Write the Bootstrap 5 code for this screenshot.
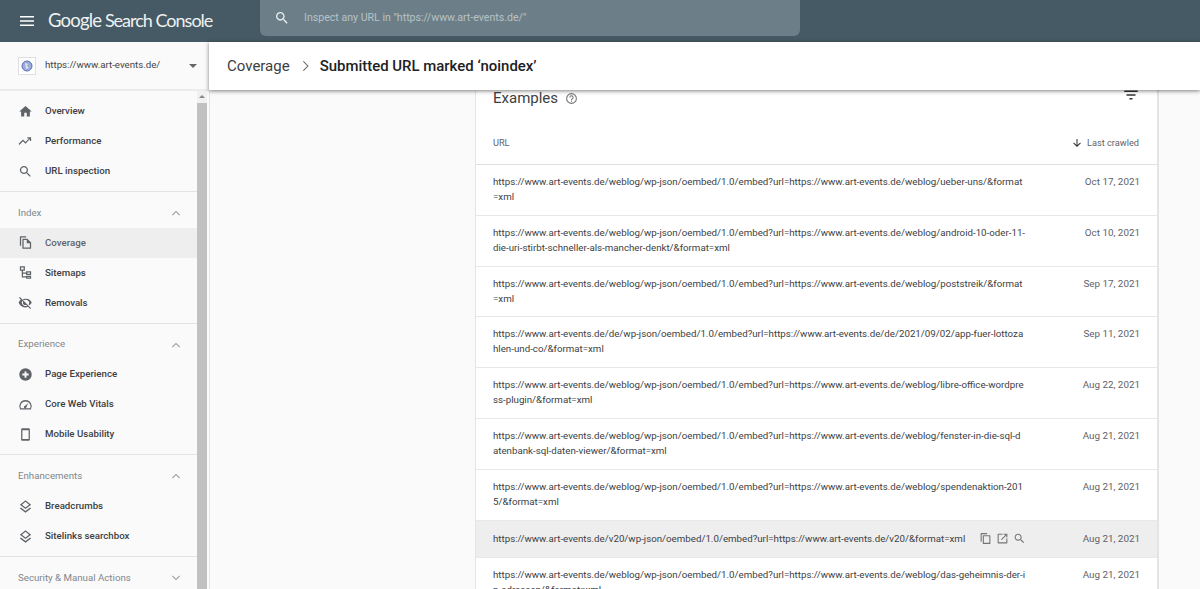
<!DOCTYPE html>
<html lang="en"><head><meta charset="utf-8"><title>Search Console</title>
<link href="https://cdn.jsdelivr.net/npm/bootstrap@5.3.0/dist/css/bootstrap.min.css" rel="stylesheet">
<script src="https://cdn.jsdelivr.net/npm/bootstrap@5.3.0/dist/js/bootstrap.bundle.min.js"></script>
<style>
html,body{height:589px;overflow:hidden}
body{font-family:Roboto,"Liberation Sans",sans-serif;background:#fafafa;color:#3c4043}
.ico{fill:currentColor;flex:none}
.topbar{height:42px;background:#455a64;color:#fff}
.burger{margin:0 13px 0 19px;width:16px;height:16px}
.logo{font-family:Lato,Roboto,sans-serif;font-size:18px;letter-spacing:-1px;width:212px;color:#eef1f2;white-space:nowrap}
.logo b{font-weight:400;font-size:18.5px;letter-spacing:-.8px}
.searchbox{width:540px;height:36px;margin-top:-6px;background:#6c7f88;border-radius:0 0 6px 6px;padding-left:14px;color:#b7c2c7;font-size:10.6px;gap:14px}
.searchbox svg{color:#eceff1}
.main{height:547px}
.side{width:210px;border-right:1px solid #e6e6e6;background:#fafafa;flex:none}
.prop{height:49px;padding:0 12px 0 18px;border-bottom:2px solid #ececec;font-size:9.7px;color:#444;background:#fafafa}
.favi{width:18px;height:18px;border:1px solid #e0e0e0;background:#fff;margin-right:9px}
.caret{margin-left:auto;border:4px solid transparent;border-top:4px solid #666;border-bottom:0}
.sidewrap{height:498px;overflow:hidden}
.sidenav{width:197px;flex:none;padding-top:5.3px}
.scroll{width:10px;background:#f1f1f1;flex:none;position:relative;margin-right:2px}
.thumb{height:100%;margin-top:12px;background:#c1c1c1}
.scroll::before{content:"";position:absolute;top:4px;left:2px;border:3px solid transparent;border-bottom:3px solid #888;border-top:0}
.item{height:30px;padding-left:18px;font-size:9.7px;font-weight:500;color:#3c4043;gap:12px}
.item svg{color:#5f6368}
.item.on{background:#eeeeee;color:#5f6368}
.sect{height:35.6px;padding:6px 14px 0 18px;font-size:9.7px;color:#80868b}
.sect svg{margin-left:auto;color:#9aa0a6}
.rule{border-top:1px solid #e4e4e4;margin-top:5px}
.head{height:48px;background:#fff;padding-left:18px;box-shadow:0 1px 4px rgba(0,0,0,.5);position:relative;z-index:2;margin-left:-1px}
.crumb{font-size:15px;color:#3c4043}
.chev{margin:0 7px;color:#5f6368}
.title{font-size:14.95px;font-weight:500;color:#202124}
.content{height:499px;overflow:hidden}
.tablecard{width:684px;margin-left:265px;background:#fff;border-left:1px solid #e4e4e4;border-right:2px solid #e4e4e4}
.exam{height:16px;padding:0 17px}
.exam span{font-size:15px;color:#3c4043}
.exam .q{margin-left:7px;color:#757575}
.exam .f{margin-left:auto;margin-top:-6px;color:#333}
.cols{height:59px;padding:16px 18px 0 17px;font-size:9.2px;color:#5f6368;border-bottom:1px solid #e0e0e0}
.cols .sortlab{margin-left:auto;gap:4px}
.cols svg{color:#333}
.rowline{height:50.8px;padding:9px 17px 0;border-bottom:1px solid #e8e8e8;font-size:9.72px;line-height:15px;color:#3c4043;white-space:nowrap}
.rowline .dt{margin-left:auto;color:#5f6368;font-size:9.85px}
.rowline.hov{height:37px;background:#eeeeee;padding-top:0;align-items:center}
.rowline.hov .tools{margin-left:14px;gap:4px;color:#757575}
</style></head><body>
<div class="topbar d-flex align-items-center">
 <svg class="ico burger" viewBox="0 0 16 16"><path d="M1 3h14v1.400H1zM1 7.300h14v1.400H1zM1 11.600h14V13H1z"/></svg>
 <div class="logo"><b>Google</b> Search Console</div>
 <div class="searchbox d-flex align-items-center">
  <svg class="ico" width="16" height="16" viewBox="0 0 24 24"><path d="M15.5 14h-.79l-.28-.27C15.41 12.59 16 11.11 16 9.5 16 5.91 13.09 3 9.5 3S3 5.91 3 9.5 5.91 16 9.5 16c1.61 0 3.09-.59 4.23-1.57l.27.28v.79l5 4.99L20.49 19l-4.99-5zm-6 0C7.01 14 5 11.99 5 9.5S7.01 5 9.5 5 14 7.01 14 9.5 11.99 14 9.5 14z"/></svg>
  <span>Inspect any URL in "https://www.art-events.de/"</span>
 </div>
</div>
<div class="main d-flex">
 <aside class="side">
  <div class="prop d-flex align-items-center">
   <span class="favi d-flex align-items-center justify-content-center"><svg width="12" height="12" viewBox="0 0 12 12"><circle cx="6" cy="6" r="5" fill="#9dabd9" stroke="#5a71b8" stroke-width="1"/><path d="M4 3l3 1-1 2 2 2-3 1z" fill="#dbe1f2"/></svg></span>
   <span>https://www.art-events.de/</span><span class="caret"></span>
  </div>
  <div class="sidewrap d-flex">
   <nav class="sidenav">
    <div class="item d-flex align-items-center"><svg class="ico" width="15" height="15" viewBox="0 0 24 24"><path d="M10 20v-6h4v6h5v-8h3L12 3 2 12h3v8z"/></svg><span>Overview</span></div>
    <div class="item d-flex align-items-center"><svg class="ico" width="15" height="15" viewBox="0 0 24 24"><path d="M2 17.500l6-6 4 4 7-7.600V11h2V5h-6v2h2.600L12 12.700l-4-4-7 7z"/></svg><span>Performance</span></div>
    <div class="item d-flex align-items-center"><svg class="ico" width="15" height="15" viewBox="0 0 24 24"><path d="M15.5 14h-.79l-.28-.27C15.41 12.59 16 11.11 16 9.5 16 5.91 13.09 3 9.5 3S3 5.91 3 9.5 5.91 16 9.5 16c1.61 0 3.09-.59 4.23-1.57l.27.28v.79l5 4.99L20.49 19l-4.99-5zm-6 0C7.01 14 5 11.99 5 9.5S7.01 5 9.5 5 14 7.01 14 9.5 11.99 14 9.5 14z"/></svg><span>URL inspection</span></div>
    <div class="rule"></div>
    <div class="sect d-flex align-items-center"><span>Index</span><svg class="ico" width="14" height="14" viewBox="0 0 24 24"><path d="M12 8l-7 7 1.400 1.400L12 10.800l5.600 5.600L19 15z"/></svg></div>
    <div class="item on d-flex align-items-center"><svg class="ico" width="15" height="15" viewBox="0 0 24 24"><path d="M4 2h9v2H5v13H3V3a1 1 0 0 1 1-1zm4 4h7l6 6v9a1 1 0 0 1-1 1H8a1 1 0 0 1-1-1V7a1 1 0 0 1 1-1zm1 2v12h10v-7h-5V8z"/></svg><span>Coverage</span></div>
    <div class="item d-flex align-items-center"><svg class="ico" width="15" height="15" viewBox="0 0 24 24"><path fill-rule="evenodd" d="M3 2h8v7H8v3h5v-2h8v6h-8v-2H8v4h5v-1h8v5h-8v-2H6V9H3zm2 2v3h4V4zm10 8v2h4v-2zm0 7v1h4v-1z"/></svg><span>Sitemaps</span></div>
    <div class="item d-flex align-items-center"><svg class="ico" width="15" height="15" viewBox="0 0 24 24"><path d="M12 6a10 10 0 0 1 10 6 10 10 0 0 1-3.500 4.200L17 14.700a6 6 0 0 0 1-2.700 6 6 0 0 0-8.500-3.700L7.500 6.800A11 11 0 0 1 12 6zM3 3l18 18-1.400 1.400-3.500-3.500A11 11 0 0 1 1 12a11 11 0 0 1 3.400-4.400L1.600 4.400zm3.800 6A6 6 0 0 0 6 12a6 6 0 0 0 8.500 5.200L13 15.700a3.500 3.500 0 0 1-4.700-4.700z"/></svg><span>Removals</span></div>
    <div class="rule"></div>
    <div class="sect d-flex align-items-center"><span>Experience</span><svg class="ico" width="14" height="14" viewBox="0 0 24 24"><path d="M12 8l-7 7 1.400 1.400L12 10.800l5.600 5.600L19 15z"/></svg></div>
    <div class="item d-flex align-items-center"><svg class="ico" width="15" height="15" viewBox="0 0 24 24"><path fill-rule="evenodd" d="M12 2a10 10 0 1 1 0 20 10 10 0 0 1 0-20zM10.500 7v3.500H7v3h3.500V17h3v-3.500H17v-3h-3.500V7z"/></svg><span>Page Experience</span></div>
    <div class="item d-flex align-items-center"><svg class="ico" width="15" height="15" viewBox="0 0 24 24"><path fill-rule="evenodd" d="M12 5a10 10 0 0 1 8.700 15H3.300A10 10 0 0 1 12 5zm0 2a8 8 0 0 0-7.400 11h14.800A8 8 0 0 0 12 7zm4.500 2.500l-3 6.500a2 2 0 1 1-2-2z"/></svg><span>Core Web Vitals</span></div>
    <div class="item d-flex align-items-center"><svg class="ico" width="15" height="15" viewBox="0 0 24 24"><path fill-rule="evenodd" d="M7 2h10a2 2 0 0 1 2 2v16a2 2 0 0 1-2 2H7a2 2 0 0 1-2-2V4a2 2 0 0 1 2-2zm0 3v14h10V5z"/></svg><span>Mobile Usability</span></div>
    <div class="rule"></div>
    <div class="sect d-flex align-items-center"><span>Enhancements</span><svg class="ico" width="14" height="14" viewBox="0 0 24 24"><path d="M12 8l-7 7 1.400 1.400L12 10.800l5.600 5.600L19 15z"/></svg></div>
    <div class="item d-flex align-items-center"><svg class="ico" width="15" height="15" viewBox="0 0 24 24"><path fill-rule="evenodd" d="M12 2l9 7-9 7-9-7zm0 2.500L6.300 9l5.700 4.500L17.700 9zM4.600 13.600L12 19.300l7.400-5.700L21 15l-9 7-9-7z"/></svg><span>Breadcrumbs</span></div>
    <div class="item d-flex align-items-center"><svg class="ico" width="15" height="15" viewBox="0 0 24 24"><path fill-rule="evenodd" d="M12 2l9 7-9 7-9-7zm0 2.500L6.300 9l5.700 4.500L17.700 9zM4.600 13.600L12 19.300l7.400-5.700L21 15l-9 7-9-7z"/></svg><span>Sitelinks searchbox</span></div>
    <div class="rule"></div>
    <div class="sect d-flex align-items-center"><span>Security &amp; Manual Actions</span><svg class="ico" width="14" height="14" viewBox="0 0 24 24"><path d="M12 16l7-7-1.400-1.400L12 13.200 6.400 7.600 5 9z"/></svg></div>
   </nav>
   <div class="scroll"><div class="thumb"></div></div>
  </div>
 </aside>
 <div class="flex-grow-1">
  <header class="head d-flex align-items-center">
   <span class="crumb">Coverage</span>
   <svg class="ico chev" width="16" height="16" viewBox="0 0 24 24"><path d="M9 5.500L10 4.500 17.500 12 10 19.500 9 18.500 15.500 12z"/></svg>
   <span class="title">Submitted URL marked ‘noindex’</span>
  </header>
  <div class="content">
   <section class="tablecard">
    <div class="exam d-flex align-items-center"><span>Examples</span>
     <svg class="ico q" width="13" height="13" viewBox="0 0 24 24"><path fill-rule="evenodd" d="M12 2a10 10 0 1 1 0 20 10 10 0 0 1 0-20zm0 2a8 8 0 1 0 0 16 8 8 0 0 0 0-16zm-1 12h2v2h-2zm1-10a4 4 0 0 1 4 4c0 2.500-3 2.700-3 5h-2c0-3.200 3-3 3-5a2 2 0 0 0-4 0H8a4 4 0 0 1 4-4z"/></svg>
     <svg class="ico f" width="18" height="18" viewBox="0 0 24 24"><path d="M3 6h18v2H3zm3 5h12v2H6zm4 5h4v2h-4z"/></svg>
    </div>
    <div class="cols d-flex align-items-center"><span>URL</span><span class="sortlab d-flex align-items-center"><svg class="ico" width="12" height="12" viewBox="0 0 24 24"><path d="M11 4h2v12.200l5.300-5.300 1.400 1.400L12 20l-7.700-7.700 1.400-1.400 5.300 5.300z"/></svg>Last crawled</span></div>
    <div class="rowline d-flex"><span>https://www.art-events.de/weblog/wp-json/oembed/1.0/embed?url=https://www.art-events.de/weblog/ueber-uns/&amp;format<br>=xml</span><span class="dt">Oct 17, 2021</span></div>
    <div class="rowline d-flex"><span>https://www.art-events.de/weblog/wp-json/oembed/1.0/embed?url=https://www.art-events.de/weblog/android-10-oder-11-<br>die-uri-stirbt-schneller-als-mancher-denkt/&amp;format=xml</span><span class="dt">Oct 10, 2021</span></div>
    <div class="rowline d-flex"><span>https://www.art-events.de/weblog/wp-json/oembed/1.0/embed?url=https://www.art-events.de/weblog/poststreik/&amp;format<br>=xml</span><span class="dt">Sep 17, 2021</span></div>
    <div class="rowline d-flex"><span>https://www.art-events.de/de/wp-json/oembed/1.0/embed?url=https://www.art-events.de/de/2021/09/02/app-fuer-lottoza<br>hlen-und-co/&amp;format=xml</span><span class="dt">Sep 11, 2021</span></div>
    <div class="rowline d-flex"><span>https://www.art-events.de/weblog/wp-json/oembed/1.0/embed?url=https://www.art-events.de/weblog/libre-office-wordpre<br>ss-plugin/&amp;format=xml</span><span class="dt">Aug 22, 2021</span></div>
    <div class="rowline d-flex"><span>https://www.art-events.de/weblog/wp-json/oembed/1.0/embed?url=https://www.art-events.de/weblog/fenster-in-die-sql-d<br>atenbank-sql-daten-viewer/&amp;format=xml</span><span class="dt">Aug 21, 2021</span></div>
    <div class="rowline d-flex"><span>https://www.art-events.de/weblog/wp-json/oembed/1.0/embed?url=https://www.art-events.de/weblog/spendenaktion-201<br>5/&amp;format=xml</span><span class="dt">Aug 21, 2021</span></div>
    <div class="rowline hov d-flex"><span>https://www.art-events.de/v20/wp-json/oembed/1.0/embed?url=https://www.art-events.de/v20/&amp;format=xml</span>
     <span class="tools d-flex align-items-center">
      <svg class="ico" width="13" height="13" viewBox="0 0 24 24"><path fill-rule="evenodd" d="M4 2h11v2H5v14H3V3a1 1 0 0 1 1-1zm4 4h12a1 1 0 0 1 1 1v14a1 1 0 0 1-1 1H8a1 1 0 0 1-1-1V7a1 1 0 0 1 1-1zm1 2v12h10V8z"/></svg>
      <svg class="ico" width="13" height="13" viewBox="0 0 24 24"><path d="M4 3h8v2H5v14h14v-7h2v8a1 1 0 0 1-1 1H4a1 1 0 0 1-1-1V4a1 1 0 0 1 1-1zm10 0h7v7h-2V6.400l-8.300 8.300-1.400-1.400L17.600 5H14z"/></svg>
      <svg class="ico" width="13" height="13" viewBox="0 0 24 24"><path d="M15.5 14h-.79l-.28-.27C15.41 12.59 16 11.11 16 9.5 16 5.91 13.09 3 9.5 3S3 5.91 3 9.500 5.91 16 9.500 16c1.610 0 3.090-.59 4.230-1.570l.27.28v.79l5 4.990L20.490 19l-4.990-5zm-6 0C7.010 14 5 11.990 5 9.500S7.010 5 9.500 5 14 7.010 14 9.500 11.990 14 9.500 14z"/></svg>
     </span><span class="dt">Aug 21, 2021</span></div>
    <div class="rowline d-flex"><span>https://www.art-events.de/weblog/wp-json/oembed/1.0/embed?url=https://www.art-events.de/weblog/das-geheimnis-der-i<br>p-adressen/&amp;format=xml</span><span class="dt">Aug 21, 2021</span></div>
   </section>
  </div>
 </div>
</div>
</body></html>
